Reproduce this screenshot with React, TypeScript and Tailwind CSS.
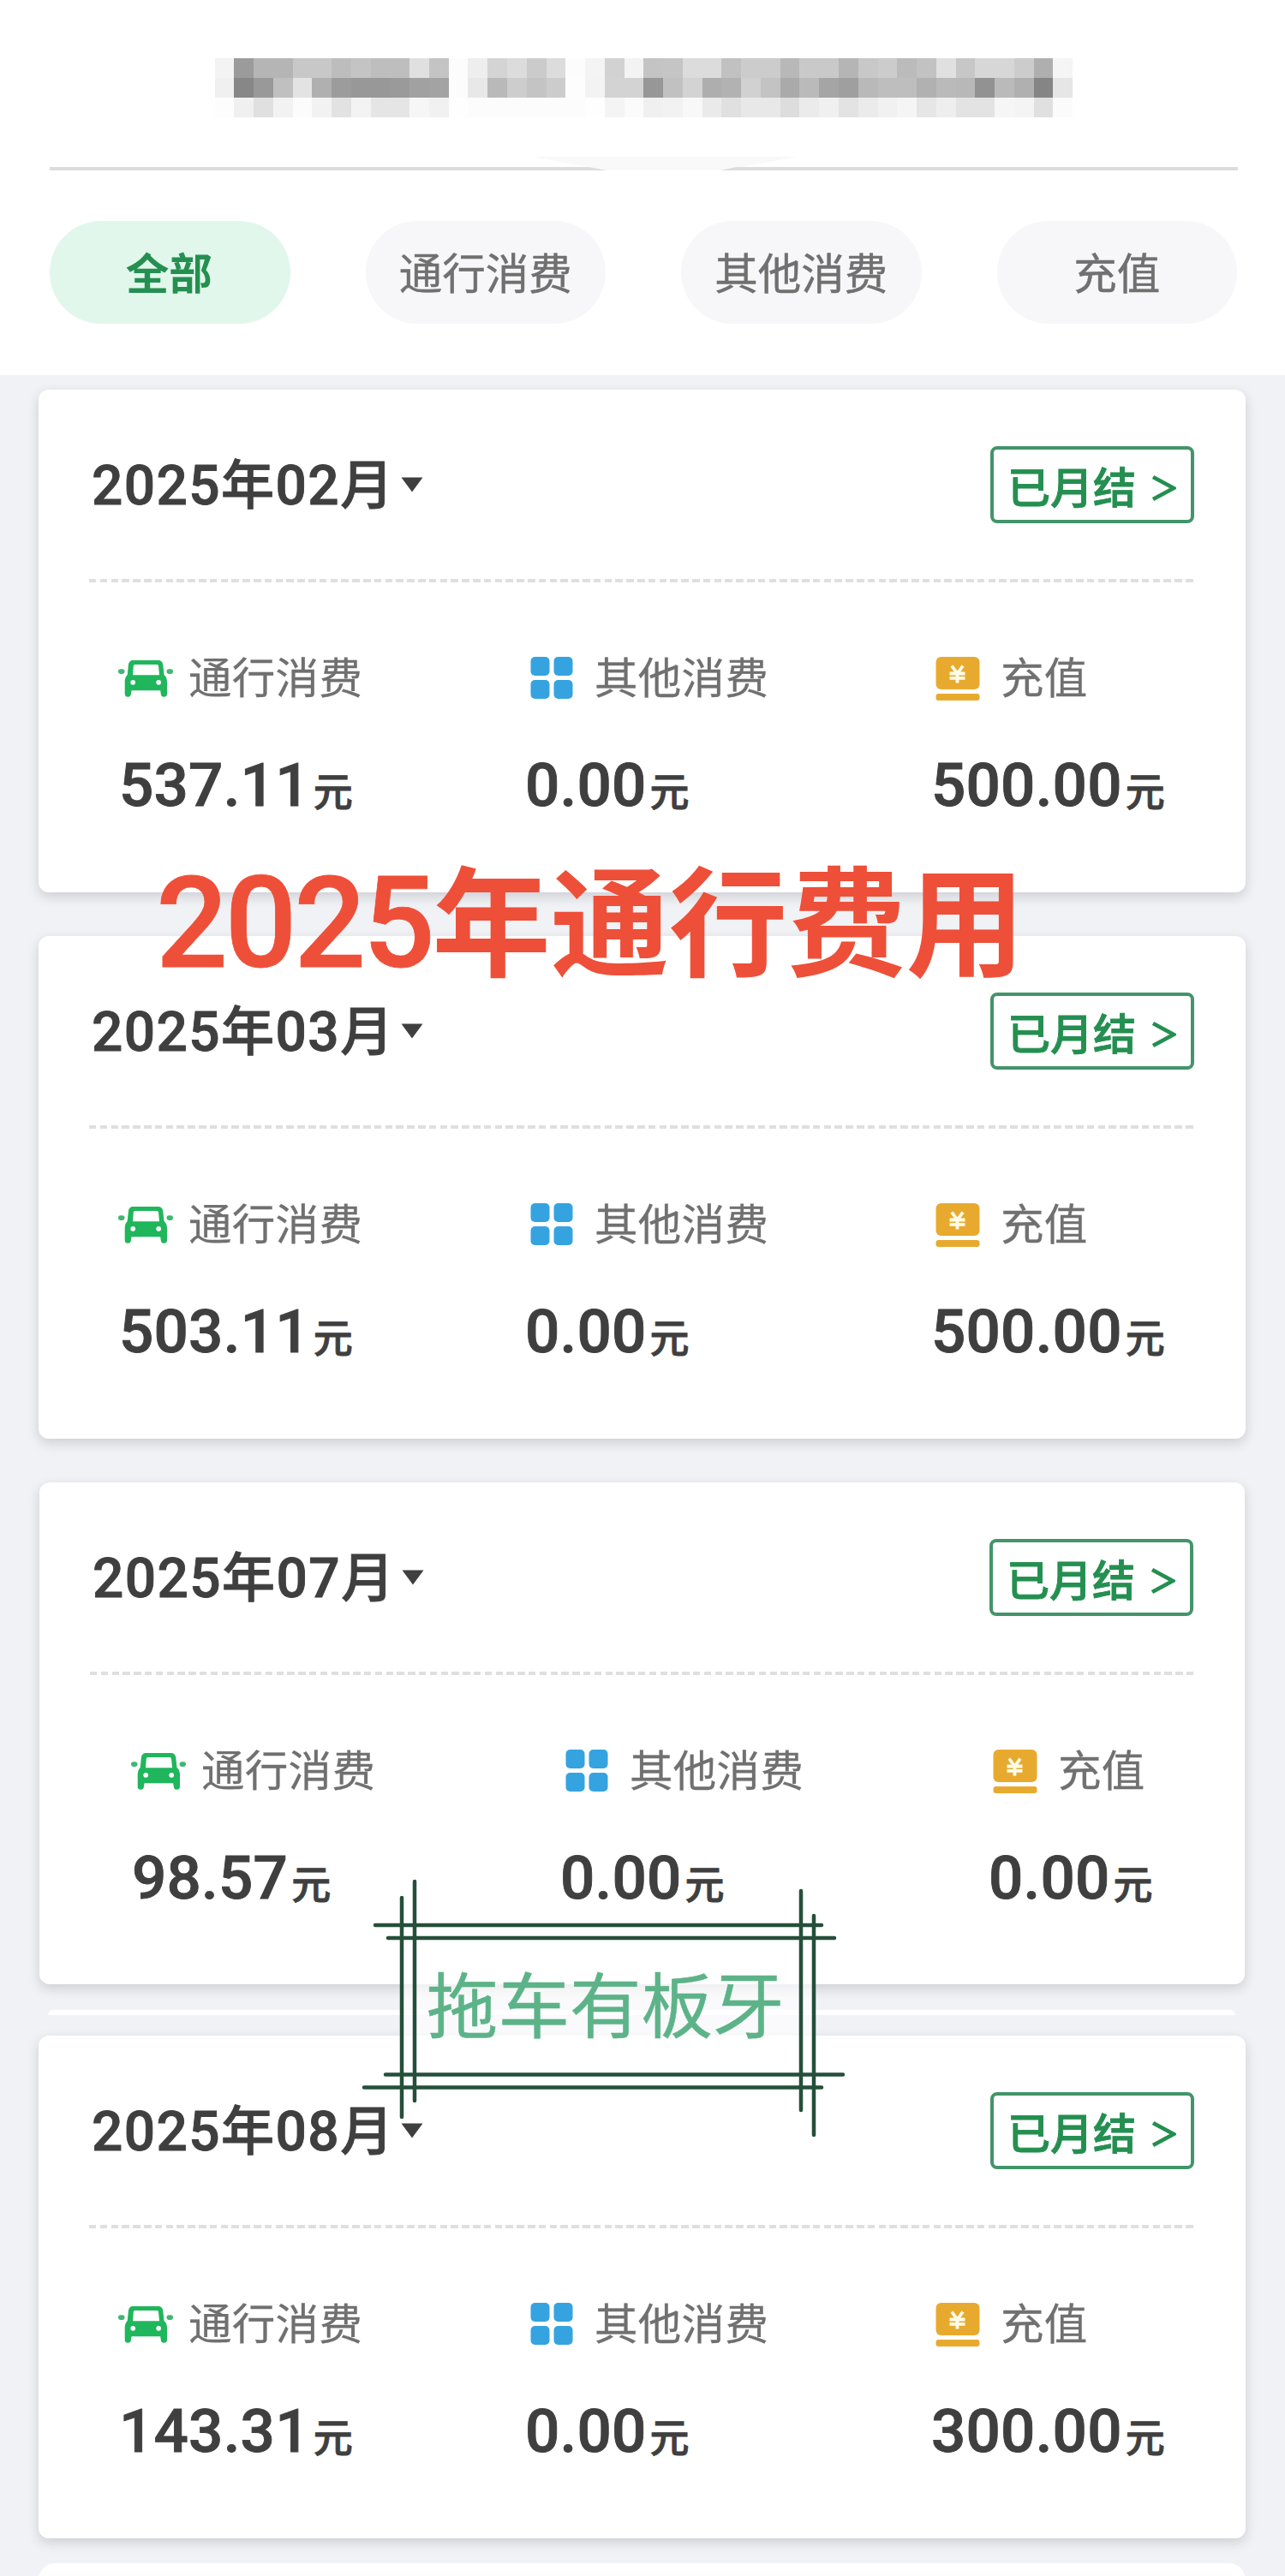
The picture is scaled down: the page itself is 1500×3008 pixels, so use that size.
import React from "react";

const CJK = "font-['Noto_Sans_CJK_SC',sans-serif]";

const mosaicRows = [
  "f39bb5b5c8c8bdc4bebee0c4fceed4dccbdcfcf4d2f3c4c5dcdcc1ccccb8c9c9b5c8ccbbc2e0c7d7d7ccaff5",
  "f08799c0e3b09c98989aa1a3fce8b9cdc4ccfdf3d3d397c1d3aeb2d1c3aabaa59fb9bebeb1bab892bab085e6",
  "fdf0e0f2fcf2e2f3e5e5f6f1fefcfcfcfcfcfcfef4fbf0f2f8eae0e8e8ddebf0e3ebf1f5e6eee3e3f6f4e0fb",
].map((row) => row.match(/../g) as string[]);

function Mosaic() {
  return (
    <div className="ml-[250.500px] flex w-[1002px] flex-col">
      {mosaicRows.map((row, r) => (
        <div key={r} className="flex h-[23px]">
          {row.map((v, i) => (
            <div key={i} className="flex-1" style={{ backgroundColor: `#${v}${v}${v}` }} />
          ))}
        </div>
      ))}
    </div>
  );
}

function CarIcon() {
  return (
    <svg viewBox="0 0 64 64" className="size-16 shrink-0">
      <path
        fill="#1fb65c"
        fillRule="evenodd"
        d="M18 11h28c4 0 6 2 6.300 5.500L53.500 28c2.700 2.300 3.500 5 3.500 8.500V50c0 2.600-1.200 3.700-3.600 3.700-2.300 0-3.300-1-3.600-3.200l-.6-4.300H15.500l-.6 4.300c-.3 2.200-1.500 3.200-3.700 3.200-2.400 0-3.500-1.100-3.500-3.700V36.500c0-3.500.8-6.200 3-8.500l1.200-11.500C12.300 13 14 11 18 11Zm1.800 5c-1.200 0-1.900.6-2 1.800L17 28.300h31L47 17.800c-.1-1.200-.8-1.800-2-1.800ZM17.200 33.900a2.900 2.900 0 1 0 0 5.800 2.900 2.900 0 0 0 0-5.800Zm30 0a2.900 2.900 0 1 0 0 5.800 2.900 2.900 0 0 0 0-5.800Z"
      />
      <rect x="0" y="21.300" width="7.500" height="5.600" rx="2.800" fill="#3fb873" />
      <rect x="56.500" y="21.300" width="7.500" height="5.600" rx="2.800" fill="#3fb873" />
    </svg>
  );
}

function GridIcon() {
  return (
    <svg viewBox="0 0 64 64" className="size-16 shrink-0" fill="#35a3e0">
      <rect x="7.500" y="7" width="22" height="22" rx="5" />
      <rect x="34.500" y="7" width="22" height="22" rx="5" />
      <rect x="7.500" y="34" width="22" height="22" rx="5" />
      <rect x="34.500" y="34" width="22" height="22" rx="5" />
    </svg>
  );
}

function YuanIcon() {
  return (
    <svg viewBox="0 0 64 64" className="size-16 shrink-0" fill="#e8aa2e">
      <rect x="6.500" y="7" width="51" height="38" rx="6" />
      <rect x="6.500" y="50" width="51" height="8" rx="3" />
      <path
        d="M25 17.500l6.500 9 6.500-9M31.500 26v11.500M22.500 26.500h18M22.500 31.800h18"
        fill="none"
        stroke="#fffbe8"
        strokeWidth="3.800"
      />
    </svg>
  );
}

function Stat({ icon, label, amount }: { icon: React.ReactNode; label: string; amount: string }) {
  return (
    <div>
      <div className="flex h-16 items-center gap-[18px]">
        {icon}
        <span
          className={`${CJK} whitespace-nowrap pb-[8px] text-[50.500px] leading-[50px] tracking-[0.300px] text-[#707070] [-webkit-text-stroke:0.300px_#707070]`}
        >
          {label}
        </span>
      </div>
      <div className="ml-[1px] mt-[57px] whitespace-nowrap font-[Roboto,'Noto_Sans_CJK_SC',sans-serif] text-[71px] font-medium leading-[72px] tracking-[0.200px] text-[#3f3f3f] [-webkit-text-stroke:0.900px_#3f3f3f]">
        {amount}
        <span className={`${CJK} ml-[4px] text-[46px] leading-none`}>元</span>
      </div>
    </div>
  );
}

type Bill = { month: string; toll: string; other: string; topUp: string; columns: string; box: string };

function BillCard({ month, toll, other, topUp, columns, box }: Bill) {
  return (
    <section
      className={`${box} shrink-0 rounded-[12px] bg-white pt-[66px] shadow-[0_5px_14px_rgba(30,32,50,0.17)]`}
    >
      <div className="ml-[59px] mr-[60px] flex h-[90px] items-center justify-between">
        <div className="ml-[3px] flex items-center">
          <h2 className="whitespace-nowrap pb-[2px] font-[Roboto,'Noto_Sans_CJK_SC',sans-serif] text-[64px] font-medium leading-[64px] tracking-[1.400px] text-[#3f3f3f] [-webkit-text-stroke:0.900px_#3f3f3f]">
            2025<span className={`${CJK} text-[62px] leading-none`}>年</span>
            {month}
            <span className={`${CJK} text-[62px] leading-none`}>月</span>
          </h2>
          <svg viewBox="0 0 26 18" className="ml-[8px] h-[18px] w-[26px]">
            <path d="M0.500 0.500h25L13 17.500z" fill="#3f3f3f" />
          </svg>
        </div>
        <button
          className={`${CJK} flex h-[90px] w-[238px] items-center rounded-[8px] border-4 border-[#43946a] pl-[16px] text-[50px] font-medium leading-[50px] text-[#248f50] [-webkit-text-stroke:0.900px_#248f50]`}
        >
          已月结
          <svg viewBox="0 0 30 32" className="ml-[17px] mt-[8px] h-8 w-[30px]">
            <path d="M3 3l24 13L3 29" fill="none" stroke="#248f50" strokeWidth="4.800" />
          </svg>
        </button>
      </div>
      <div className="ml-[59px] mr-[60px] mt-[65px] h-1 bg-[repeating-linear-gradient(90deg,#dfdfdf_0px,#dfdfdf_8.500px,#ffffff_8.500px,#ffffff_12.800px)]" />
      <div className={`mt-20 grid ${columns}`}>
        <Stat icon={<CarIcon />} label="通行消费" amount={toll} />
        <Stat icon={<GridIcon />} label="其他消费" amount={other} />
        <Stat icon={<YuanIcon />} label="充值" amount={topUp} />
      </div>
    </section>
  );
}

const wide = "grid-cols-[474px_474px_300px] pl-[93px]";
const shifted = "grid-cols-[500px_500px_250px] pl-[107px]";
const full = "ml-[45px] w-[1409px] h-[587px]";

const tabs = ["全部", "通行消费", "其他消费", "充值"];

export default function App() {
  return (
    <div className="relative flex h-[3008px] w-[1500px] flex-col overflow-hidden bg-[#f1f2f5]">
      <header className="h-[438px] shrink-0 bg-white pt-[68px]">
        <Mosaic />
        <div className="ml-[58px] mt-[46px] flex h-4 w-[1387px] items-end">
          <div className="h-1 w-[654px] bg-[#dcdcdc] [clip-path:polygon(0_0,98%_0,100%_100%,0_100%)]" />
          <div className="-mx-[90px] h-4 flex-1 bg-[#f9f9f9] [clip-path:polygon(0_0,100%_0,72%_100%,28%_100%)]" />
          <div className="h-1 w-[604px] bg-[#dcdcdc] [clip-path:polygon(3%_0,100%_0,100%_100%,0_100%)]" />
        </div>
        <nav className="ml-[58px] mt-[59px] flex gap-[88px]">
          {tabs.map((t, i) => (
            <button
              key={t}
              className={`${CJK} flex h-[120px] w-[280.500px] items-center justify-center rounded-full pb-[4px] text-[50.500px] leading-[50px] ${
                i === 0
                  ? "bg-[#e1f7eb] pr-[2px] font-bold text-[#248f50]"
                  : "bg-[#f7f7f9] text-[#707070] [-webkit-text-stroke:0.500px_#707070]"
              }`}
            >
              {t}
            </button>
          ))}
        </nav>
      </header>

      <div className="h-[17px] shrink-0" />
      <BillCard month="02" toll="537.11" other="0.00" topUp="500.00" columns={wide} box={full} />
      <div className="h-[51px] shrink-0" />
      <BillCard month="03" toll="503.11" other="0.00" topUp="500.00" columns={wide} box={full} />
      <div className="h-[51px] shrink-0" />
      <BillCard month="07" toll="98.57" other="0.00" topUp="0.00" columns={shifted} box="ml-[46px] w-[1407px] h-[586px]" />
      <div className="ml-[56px] mt-[30px] h-[6px] w-[1386px] shrink-0 rounded-t-[6px] bg-white" />
      <div className="h-[24px] shrink-0" />
      <BillCard month="08" toll="143.31" other="0.00" topUp="300.00" columns={wide} box={full} />
      <div className="ml-[45px] mt-[29px] h-[40px] w-[1409px] shrink-0 rounded-t-[20px] bg-white" />

      <div className="absolute left-[182px] top-[1000px] whitespace-nowrap font-[Roboto,'Noto_Sans_CJK_SC',sans-serif] text-[148px] font-medium leading-[150px] tracking-[-3.500px] text-[#ee4f39]">
        <span className="[-webkit-text-stroke:0.800px_#ee4f39]">2025</span>
        <span className={`${CJK} text-[138.300px] font-bold leading-none tracking-normal`}>年通行费用</span>
      </div>

      <div className="absolute left-[422px] top-[2194px] h-[304px] w-[566px]">
        <div className="absolute left-[47px] top-[54px] h-[190px] w-[481px] bg-white/65" />
        <svg viewBox="422 2194 566 304" className="absolute inset-0 size-full">
          <path
            d="M438 2248H959M453 2263H974M450 2422.500H984M425 2437.500H959M469 2216V2472M484 2197V2453M935 2208V2464M950 2237V2493"
            stroke="#254f3a"
            strokeWidth="4.500"
            strokeLinecap="round"
          />
        </svg>
        <div
          className={`${CJK} absolute left-[76px] top-[101px] whitespace-nowrap text-[83.500px] leading-[84px] text-[#5db388] [-webkit-text-stroke:0.500px_#5db388]`}
        >
          拖车有板牙
        </div>
      </div>
    </div>
  );
}
